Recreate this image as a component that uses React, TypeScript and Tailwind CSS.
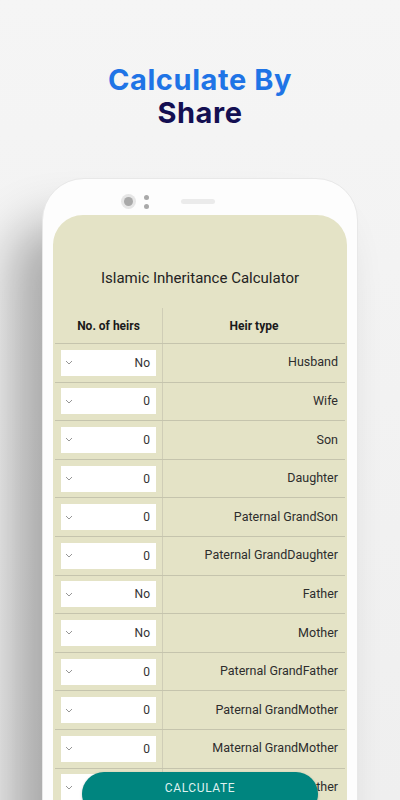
import React from 'react';

const heirs: { type: string; value: string }[] = [
  { type: 'Husband', value: 'No' },
  { type: 'Wife', value: '0' },
  { type: 'Son', value: '0' },
  { type: 'Daughter', value: '0' },
  { type: 'Paternal GrandSon', value: '0' },
  { type: 'Paternal GrandDaughter', value: '0' },
  { type: 'Father', value: 'No' },
  { type: 'Mother', value: 'No' },
  { type: 'Paternal GrandFather', value: '0' },
  { type: 'Paternal GrandMother', value: '0' },
  { type: 'Maternal GrandMother', value: '0' },
  { type: 'Full Brother', value: '0' },
];

function Chevron(): React.JSX.Element {
  return (
    <svg width="8" height="5" viewBox="0 0 8 5" fill="none" className="shrink-0">
      <path d="M1 1l3 3 3-3" stroke="#8a8a8a" strokeWidth="0.9" />
    </svg>
  );
}

function HeirRow({ type, value }: { type: string; value: string }): React.JSX.Element {
  return (
    <div className="flex h-[38.6px] border-b border-[#c5c4ad]">
      <div className="flex w-[108px] shrink-0 items-center border-r border-[#cfcdb6] pl-[6px] pr-[6px]">
        <div className="flex h-[26px] w-[96px] items-center justify-between bg-white pl-[4px] pr-[6px]">
          <Chevron />
          <span className="text-[12px] text-[#333]">{value}</span>
        </div>
      </div>
      <div className="flex flex-1 items-center justify-end pr-[7px] text-[12.5px] text-[#2d2d2d]">
        {type}
      </div>
    </div>
  );
}

export default function App(): React.JSX.Element {
  return (
    <div className="relative h-[800px] w-[400px] overflow-hidden bg-gradient-to-b from-[#f5f5f5] to-[#efefef]">
      <div
        className="pt-[63px] text-center text-[29px] font-bold leading-[33px] tracking-[0.02em]"
        style={{ fontFamily: 'Inter, "Open Sans", sans-serif' }}
      >
        <div className="text-[#1f74e6]">Calculate By</div>
        <div className="text-[#140f52]">Share</div>
      </div>

      <div className="mx-[42px] mt-[49px] h-[700px] rounded-t-[42px] border border-[#e8e8e8] bg-[#fdfdfd] px-[10px] shadow-[-30px_45px_50px_rgba(0,0,0,0.3)]">
        <div className="flex h-[36px] items-start pl-[68px] pt-[15px]">
          <div className="flex h-[15px] items-center">
            <div className="flex h-[15px] w-[15px] items-center justify-center rounded-full bg-[#e6e6e6]">
              <div className="h-[9px] w-[9px] rounded-full bg-[#a9a9a9]" />
            </div>
            <div className="ml-[8px] flex flex-col gap-[4px]">
              <div className="h-[5px] w-[5px] rounded-full bg-[#a9a9a9]" />
              <div className="h-[5px] w-[5px] rounded-full bg-[#a9a9a9]" />
            </div>
            <div className="ml-[32px] h-[5px] w-[34px] rounded-full bg-[#ebebeb]" />
          </div>
        </div>

        <div
          className="h-[600px] rounded-t-[30px] bg-[#e4e3c6] px-[2px] pt-[53px]"
          style={{ fontFamily: 'Roboto, "Noto Sans", sans-serif' }}
        >
          <div className="text-center text-[15px] leading-[20px] text-[#222]">
            Islamic Inheritance Calculator
          </div>
          <div className="mt-[20px]">
            <div className="flex h-[36px] border-b border-[#c5c4ad]">
              <div className="flex w-[108px] shrink-0 items-center justify-center border-r border-[#cfcdb6] text-[12px] font-bold text-[#1a1a1a]">
                No. of heirs
              </div>
              <div className="flex flex-1 items-center justify-center text-[12px] font-bold text-[#1a1a1a]">
                Heir type
              </div>
            </div>
            {heirs.map((h) => (
              <HeirRow key={h.type} type={h.type} value={h.value} />
            ))}
          </div>
        </div>
      </div>

      <button
        className="absolute left-[82px] top-[772px] h-[44px] w-[236px] rounded-full bg-[#00857f] pb-[12px] text-[12px] tracking-[0.05em] text-[#dff1ef] shadow-[0_1px_3px_rgba(0,0,0,0.2)]"
        style={{ fontFamily: 'Roboto, "Noto Sans", sans-serif' }}
      >
        CALCULATE
      </button>
    </div>
  );
}
